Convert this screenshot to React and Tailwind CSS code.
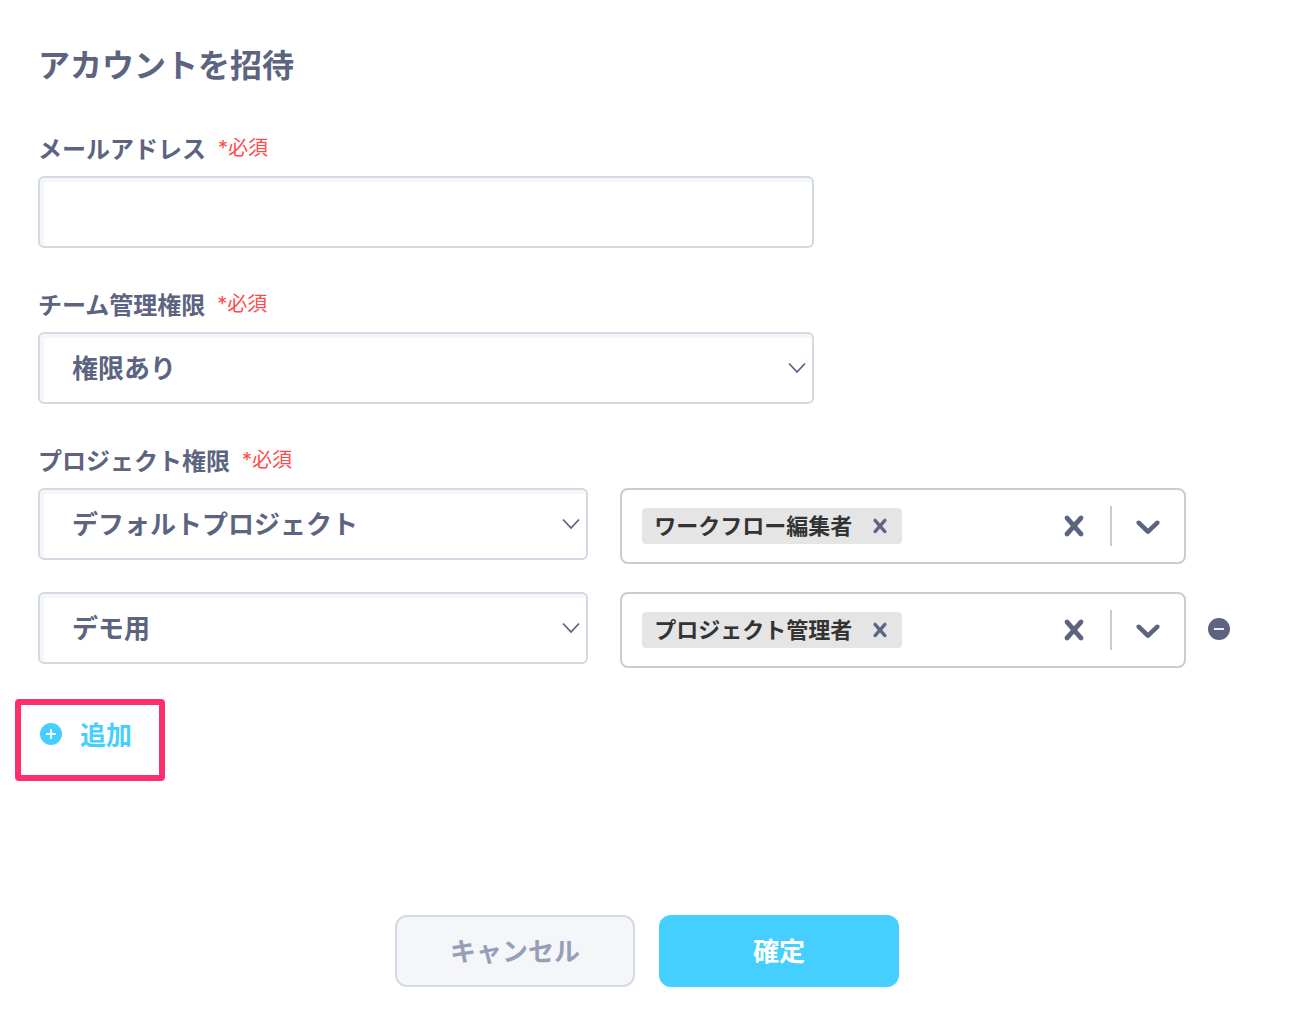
import React, { useState } from 'react';

const CrossIcon = ({ className }) => (
  <svg viewBox="0 0 20 20" className={className} fill="currentColor" aria-hidden="true">
    <path d="M14.348 14.849c-0.469 0.469-1.229 0.469-1.697 0l-2.651-3.030-2.651 3.029c-0.469 0.469-1.229 0.469-1.697 0-0.469-0.469-0.469-1.229 0-1.697l2.758-3.15-2.759-3.152c-0.469-0.469-0.469-1.228 0-1.697s1.228-0.469 1.697 0l2.652 3.031 2.651-3.031c0.469-0.469 1.228-0.469 1.697 0s0.469 1.229 0 1.697l-2.758 3.152 2.758 3.15c0.469 0.469 0.469 1.229 0 1.698z" />
  </svg>
);

const DownIcon = ({ className }) => (
  <svg viewBox="0 0 20 20" className={className} fill="currentColor" aria-hidden="true">
    <path d="M4.516 7.548c0.436-0.446 1.043-0.481 1.576 0l3.908 3.747 3.908-3.747c0.533-0.481 1.141-0.446 1.574 0 0.436 0.445 0.408 1.197 0 1.615-0.406 0.418-4.695 4.502-4.695 4.502-0.217 0.223-0.502 0.335-0.787 0.335s-0.57-0.112-0.789-0.335c0 0-4.287-4.084-4.695-4.502s-0.436-1.17 0-1.615z" />
  </svg>
);

const CircleIcon = ({ plus }) => (
  <svg viewBox="0 0 22 22" className="size-[22px] shrink-0" aria-hidden="true">
    <circle cx="11" cy="11" r="11" fill="currentColor" />
    <path d={plus ? 'M6 11h10M11 6v10' : 'M6 11h10'} stroke="white" strokeWidth="1.8" fill="none" />
  </svg>
);

const FieldLabel = ({ htmlFor, children }) => (
  <label htmlFor={htmlFor} className="flex items-center gap-3 text-2xl leading-8 font-bold">
    {children}
    <span className="font-['Inter','Noto_Sans_CJK_JP',sans-serif] text-xl leading-8 font-normal text-[#ff4b4b]">
      *必須
    </span>
  </label>
);

const SelectBox = ({ id, label, value, options, onChange }) => (
  <div className="relative">
    <select
      id={id}
      aria-label={label}
      value={value}
      onChange={(e) => onChange(e.target.value)}
      className="h-18 w-full appearance-none rounded-md border-2 border-[#d3dae3] bg-white pr-12 pb-1 pl-8 text-[26px] font-bold shadow-[inset_4px_4px_0_#f4f6f8] focus:outline-none"
    >
      {options.map((option) => (
        <option key={option}>{option}</option>
      ))}
    </select>
    <svg
      viewBox="0 0 18 12"
      className="pointer-events-none absolute top-[30px] right-2 h-3 w-[18px]"
      fill="none"
      stroke="currentColor"
      strokeWidth="1.8"
      aria-hidden="true"
    >
      <path d="M1 1.5l8 8.5 8-8.5" />
    </svg>
  </div>
);

const RoleSelect = ({ roles, onChange }) => (
  <div className="flex h-19 items-center rounded-lg border-2 border-[#cccccc] bg-white pl-5">
    <div className="flex flex-1 items-center gap-1">
      {roles.map((role) => (
        <div key={role} className="flex h-9 items-center rounded-sm bg-[#e5e5e5] pl-3">
          <span className="pr-1.5 pb-1 text-[22px] leading-none font-bold whitespace-nowrap text-[#333333]">{role}</span>
          <button
            type="button"
            aria-label={`${role}を削除`}
            onClick={() => onChange(roles.filter((r) => r !== role))}
            className="px-2"
          >
            <CrossIcon className="size-7" />
          </button>
        </div>
      ))}
    </div>
    <button type="button" aria-label="すべて削除" onClick={() => onChange([])} className="px-4">
      <CrossIcon className="size-10" />
    </button>
    <span className="h-10 w-0.5 bg-[#cccccc]" />
    <button type="button" aria-label="ロールを選択" className="px-4">
      <DownIcon className="size-10" />
    </button>
  </div>
);

const projects = ['デフォルトプロジェクト', 'デモ用'];

const App = () => {
  const [email, setEmail] = useState('');
  const [permission, setPermission] = useState('権限あり');
  const [rows, setRows] = useState([
    { id: 1, project: 'デフォルトプロジェクト', roles: ['ワークフロー編集者'] },
    { id: 2, project: 'デモ用', roles: ['プロジェクト管理者'] },
  ]);

  const updateRow = (id, changes) => {
    setRows((prev) => prev.map((row) => (row.id === id ? { ...row, ...changes } : row)));
  };

  const addRow = () => {
    setRows((prev) => [...prev, { id: Date.now(), project: projects[0], roles: [] }]);
  };

  const removeRow = (id) => {
    setRows((prev) => prev.filter((row) => row.id !== id));
  };

  return (
    <div className="min-h-screen bg-white px-[38px] pt-10 pb-8 font-['Noto_Sans_CJK_JP',sans-serif] text-[#5c6480]">
      <form onSubmit={(e) => e.preventDefault()}>
        <div className="flex flex-col gap-10">
          <h1 className="pb-1.5 text-[32px] leading-[46px] font-bold">アカウントを招待</h1>

          <div className="flex max-w-[776px] flex-col gap-3">
            <FieldLabel htmlFor="email">メールアドレス</FieldLabel>
            <input
              id="email"
              type="email"
              value={email}
              onChange={(e) => setEmail(e.target.value)}
              className="h-18 w-full rounded-md border-2 border-[#d3dae3] bg-white px-8 text-[26px] font-bold shadow-[inset_4px_4px_0_#f4f6f8] focus:outline-none"
            />
          </div>

          <div className="flex max-w-[776px] flex-col gap-3">
            <FieldLabel htmlFor="permission">チーム管理権限</FieldLabel>
            <SelectBox
              id="permission"
              value={permission}
              options={['権限あり', '権限なし']}
              onChange={setPermission}
            />
          </div>

          <div className="flex max-w-[1192px] flex-col gap-3">
            <FieldLabel htmlFor="project-1">プロジェクト権限</FieldLabel>
            <div className="flex flex-col gap-7">
              {rows.map((row, index) => (
                <div key={row.id} className="flex items-center gap-[22px]">
                  <div className="grid flex-1 grid-cols-[35fr_36fr] items-start gap-8">
                    <SelectBox
                      id={`project-${row.id}`}
                      label={index > 0 ? 'プロジェクト' : undefined}
                      value={row.project}
                      options={projects}
                      onChange={(project) => updateRow(row.id, { project })}
                    />
                    <RoleSelect roles={row.roles} onChange={(roles) => updateRow(row.id, { roles })} />
                  </div>
                  <div className="flex w-[22px] pb-0.5">
                    {index > 0 && (
                      <button type="button" aria-label="行を削除" onClick={() => removeRow(row.id)}>
                        <CircleIcon />
                      </button>
                    )}
                  </div>
                </div>
              ))}
            </div>
          </div>
        </div>

        <button
          type="button"
          onClick={addRow}
          className="relative mt-12 flex items-center gap-[18px] pl-0.5 text-[26px] leading-9 font-bold text-[#45cfff]"
        >
          <CircleIcon plus />
          追加
          {/* highlight frame around the add button */}
          <span className="pointer-events-none absolute -top-[17px] -right-[33px] -bottom-[29px] -left-[23px] rounded-sm border-6 border-[#ff2e6e]" />
        </button>

        <div className="mt-[163px] flex justify-center gap-6">
          <button
            type="button"
            className="h-18 w-60 rounded-xl border-2 border-[#d3dae3] bg-[#f4f6f9] pb-1 text-[26px] font-bold text-[#979fb8]"
          >
            キャンセル
          </button>
          <button type="submit" className="h-18 w-60 rounded-xl bg-[#45cfff] pb-1 text-[26px] font-bold text-white">
            確定
          </button>
        </div>
      </form>
    </div>
  );
};

export default App;
